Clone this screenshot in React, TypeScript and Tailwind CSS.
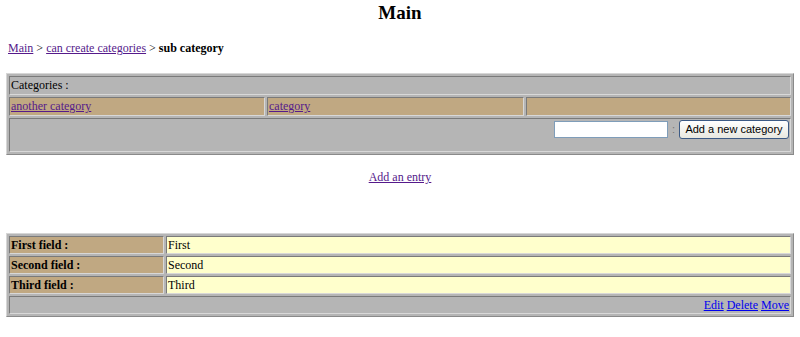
import React from 'react';

const serif = { fontFamily: '"Liberation Serif", "Times New Roman", serif' };

const cell = 'border border-t-[#7a7a7a] border-l-[#7a7a7a] border-b-[#d8d8d8] border-r-[#d8d8d8] px-px';
const tableFrame =
  'w-full border-separate border-spacing-[2px] border border-t-[#d6d6d6] border-l-[#d6d6d6] border-b-[#8a8a8a] border-r-[#8a8a8a] bg-[#b5b5b5]';

const fields = [
  { label: 'First field :', value: 'First' },
  { label: 'Second field :', value: 'Second' },
  { label: 'Third field :', value: 'Third' },
];

export default function App() {
  return (
    <div className="w-[800px] min-h-[337px] bg-white text-black text-[12px]" style={serif}>
      <h3 className="pt-[2px] text-center text-[19px] leading-[22px] font-bold">Main</h3>

      <div className="mt-[17px] px-[8px] leading-[14px]">
        <a href="#" className="text-[#551a8b] underline">Main</a>
        {' > '}
        <a href="#" className="text-[#551a8b] underline">can create categories</a>
        {' > '}
        <b>sub category</b>
      </div>

      {/* categories */}
      <div className="mt-[18px] px-[6px]">
        <table className={tableFrame}>
          <tbody>
            <tr>
              <td colSpan={3} className={`${cell} leading-[15px] py-px`}>Categories :</td>
            </tr>
            <tr className="bg-[#c0a882]">
              <td className={`${cell} w-[256px] leading-[15px] py-px`}>
                <a href="#" className="text-[#551a8b] underline">another category</a>
              </td>
              <td className={`${cell} w-[257px] leading-[15px] py-px`}>
                <a href="#" className="text-[#551a8b] underline">category</a>
              </td>
              <td className={cell}></td>
            </tr>
            <tr>
              <td colSpan={3} className={`${cell} py-px text-right`}>
                <form
                  className="mb-[11px] flex items-center justify-end gap-[4px]"
                  style={{ fontFamily: '"Liberation Sans", Arial, sans-serif' }}
                  onSubmit={(e) => e.preventDefault()}
                >
                  <input
                    type="text"
                    className="w-[114px] h-[17px] border border-[#7f9db9] bg-white outline-none"
                  />
                  <span className="text-[#777] text-[11px]">:</span>
                  <button
                    type="button"
                    className="h-[19px] w-[110px] rounded-[3px] border border-[#3c5a85] bg-gradient-to-b from-white to-[#e8e8e0] text-[11px] leading-[17px] text-black"
                  >
                    Add a new category
                  </button>
                </form>
              </td>
            </tr>
          </tbody>
        </table>
      </div>

      <div className="mt-[15px] text-center leading-[14px]">
        <a href="#" className="text-[#551a8b] underline">Add an entry</a>
      </div>

      {/* entry */}
      <div className="mt-[49px] px-[6px]">
        <table className={tableFrame}>
          <tbody>
            {fields.map((f) => (
              <tr key={f.label}>
                <td className={`${cell} w-[155px] bg-[#c0a882] font-bold leading-[14px] py-px`}>{f.label}</td>
                <td className={`${cell} bg-[#ffffcc] leading-[14px] py-px`}>{f.value}</td>
              </tr>
            ))}
            <tr>
              <td colSpan={2} className={`${cell} text-right leading-[14px] py-px`}>
                <a href="#" className="text-[#0000ee] underline">Edit</a>{' '}
                <a href="#" className="text-[#0000ee] underline">Delete</a>{' '}
                <a href="#" className="text-[#0000ee] underline">Move</a>
              </td>
            </tr>
          </tbody>
        </table>
      </div>
    </div>
  );
}
